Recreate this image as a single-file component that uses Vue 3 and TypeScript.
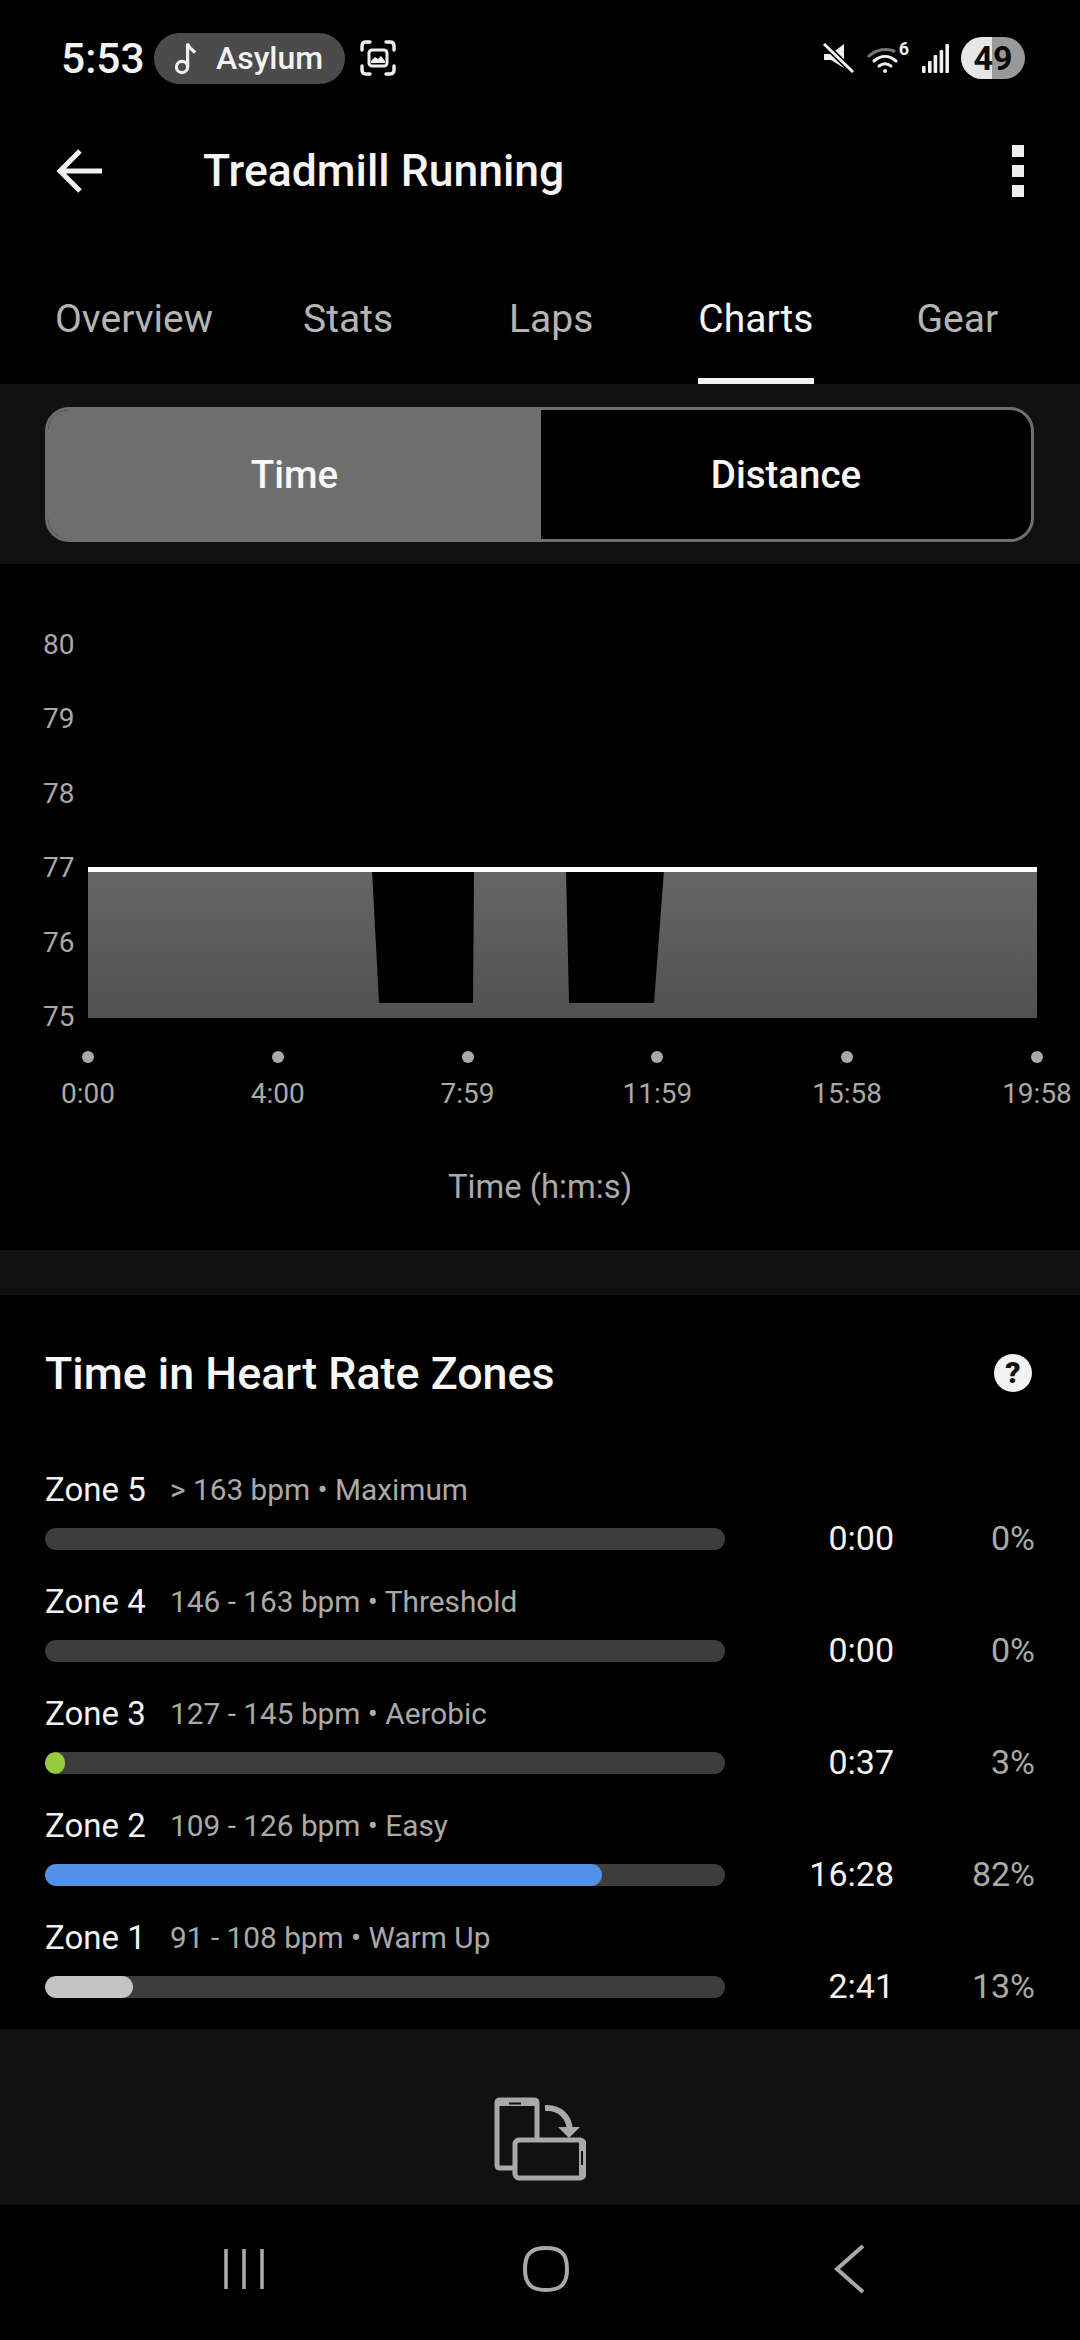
<script setup lang="ts">
import { ref } from "vue";

const tabs = ref(["Overview", "Stats", "Laps", "Charts", "Gear"]);
const yLabels = ref(["80", "79", "78", "77", "76", "75"]);
const xLabels = ref(["0:00", "4:00", "7:59", "11:59", "15:58", "19:58"]);

const zones = ref([
  { name: "Zone 5", info: "> 163 bpm • Maximum", time: "0:00", pct: "0%", width: 0, color: "transparent" },
  { name: "Zone 4", info: "146 - 163 bpm • Threshold", time: "0:00", pct: "0%", width: 0, color: "transparent" },
  { name: "Zone 3", info: "127 - 145 bpm • Aerobic", time: "0:37", pct: "3%", width: 20, color: "#96cb3c" },
  { name: "Zone 2", info: "109 - 126 bpm • Easy", time: "16:28", pct: "82%", width: 557, color: "#5191ea" },
  { name: "Zone 1", info: "91 - 108 bpm • Warm Up", time: "2:41", pct: "13%", width: 88, color: "#c4c4c4" },
]);
</script>

<template>
  <div class="screen">
    <div class="status-bar">
      <span class="clock">5:53</span>
      <div class="music-pill">
        <svg class="note" width="28" height="34" viewBox="0 0 28 34" fill="none" stroke="#f0f0f0" stroke-width="3.2">
          <circle cx="8" cy="26" r="5.6" />
          <path d="M13.6 26V2.5c1 4.5 4.5 6 7.5 9" />
        </svg>
        <span>Asylum</span>
      </div>
      <svg class="capture" width="36" height="36" viewBox="0 0 36 36" fill="none" stroke="#f0f0f0" stroke-width="3.4" stroke-linecap="round">
        <path d="M2 10V6q0-4 4-4h4M26 2h4q4 0 4 4v4M34 26v4q0 4-4 4h-4M10 34H6q-4 0-4-4v-4" />
        <rect x="9" y="10" width="18" height="16" rx="3" stroke-width="3" />
        <path d="M11 21l4-4 3 2 3-3 4 5v2H11z" fill="#f0f0f0" stroke="none" />
      </svg>

      <div class="status-right">
        <svg width="32" height="30" viewBox="0 0 32 30" fill="#f0f0f0">
          <path d="M1 11h7L21 1v24L8 17H1z" />
          <path d="M1 1l29 28" stroke="#000" stroke-width="6" />
          <path d="M1 1l29 28" stroke="#f0f0f0" stroke-width="3" />
        </svg>
        <div class="wifi">
          <svg width="38" height="26" viewBox="0 0 38 26" fill="none" stroke-linecap="round">
            <path d="M2 9C10 2 20 1 27 4" stroke="#777" stroke-width="3" />
            <path d="M7 14c7-6 15-6 22 0" stroke="#f0f0f0" stroke-width="3" />
            <path d="M12 19c4-3 8-3 12 0" stroke="#f0f0f0" stroke-width="3" />
            <circle cx="18" cy="24" r="2" fill="#f0f0f0" />
          </svg>
          <span class="wifi-six">6</span>
        </div>
        <svg class="signal" width="28" height="29" viewBox="0 0 28 29" fill="#f0f0f0">
          <rect x="0" y="22" width="3.6" height="7" rx="1" />
          <rect x="6" y="17" width="3.6" height="12" rx="1" />
          <rect x="11.6" y="11" width="3.6" height="18" rx="1" />
          <rect x="17.6" y="6" width="3.6" height="23" rx="1" />
          <rect x="23.4" y="0" width="3.6" height="29" rx="1" />
        </svg>
        <div class="battery"><span>49</span></div>
      </div>
    </div>

    <header class="app-header">
      <svg width="46" height="44" viewBox="0 0 46 44" fill="none" stroke="#f2f2f2" stroke-width="5">
        <path d="M46 22H4M24 2L4 22l20 20" />
      </svg>
      <h1>Treadmill Running</h1>
      <div class="kebab"><i></i><i></i><i></i></div>
    </header>

    <nav class="tabs">
      <div v-for="t in tabs" :key="t" class="tab" :class="{ active: t === 'Charts' }">{{ t }}</div>
    </nav>

    <div class="band toggle-band">
      <div class="toggle">
        <div class="seg selected">Time</div>
        <div class="seg">Distance</div>
      </div>
    </div>

    <section class="chart">
      <div class="chart-main">
        <div class="y-axis">
          <span v-for="y in yLabels" :key="y">{{ y }}</span>
        </div>
        <svg class="plot" width="949" height="446" viewBox="0 0 949 446">
          <defs>
            <linearGradient id="areaFill" x1="0" y1="0" x2="0" y2="1">
              <stop offset="0" stop-color="#666666" />
              <stop offset="1" stop-color="#515151" />
            </linearGradient>
          </defs>
          <path
            d="M0 262H284L291 395H385L386 262H478L481 395H566L576 262H949V410H0Z"
            fill="url(#areaFill)"
          />
          <rect x="0" y="259" width="949" height="5" fill="#fff" />
        </svg>
      </div>
      <div class="x-axis">
        <div v-for="x in xLabels" :key="x" class="tick">
          <i class="dot"></i>
          <span>{{ x }}</span>
        </div>
      </div>
      <div class="axis-title">Time (h:m:s)</div>
    </section>

    <div class="band gap-band"></div>

    <section class="zones">
      <div class="zones-head">
        <h2>Time in Heart Rate Zones</h2>
        <div class="help">?</div>
      </div>
      <div v-for="z in zones" :key="z.name" class="zone">
        <div class="zone-main">
          <div class="zone-label">
            <span class="zone-name">{{ z.name }}</span>
            <span class="zone-info">{{ z.info }}</span>
          </div>
          <div class="track">
            <div class="fill" :style="{ width: z.width + 'px', background: z.color }"></div>
          </div>
        </div>
        <div class="zone-time">{{ z.time }}</div>
        <div class="zone-pct">{{ z.pct }}</div>
      </div>
    </section>

    <div class="band rotate-band">
      <svg width="92" height="84" viewBox="0 0 92 84" fill="none" stroke="#a9a9a9">
        <path d="M20 71H6q-3 0-3-3V6q0-3 3-3h34q3 0 3 3v38" stroke-width="5" />
        <rect x="1" y="3" width="44" height="6" fill="#a9a9a9" stroke="none" rx="3" />
        <rect x="15" y="5.5" width="12" height="2" fill="#111" stroke="none" />
        <rect x="21" y="43" width="69" height="38" rx="4" stroke-width="5" />
        <rect x="85" y="44" width="6" height="36" fill="#a9a9a9" stroke="none" />
        <rect x="87" y="54" width="2" height="14" fill="#111" stroke="none" />
        <path d="M51 11c15-1 24 9 25 22" stroke-width="6" />
        <path d="M64 30h22L75 41z" fill="#a9a9a9" stroke="none" />
      </svg>
    </div>

    <div class="nav-bar">
      <svg width="44" height="44" viewBox="0 0 44 44" stroke="#a9a9a9" stroke-width="3.6">
        <path d="M4 2v40M22 2v40M40 2v40" />
      </svg>
      <svg width="46" height="46" viewBox="0 0 46 46" fill="none" stroke="#a9a9a9" stroke-width="4">
        <path d="M23 2c15 0 21 6 21 21s-6 21-21 21S2 38 2 23 8 2 23 2z" />
      </svg>
      <svg width="32" height="50" viewBox="0 0 32 50" fill="none" stroke="#a9a9a9" stroke-width="4">
        <path d="M30 2L4 25l26 23" />
      </svg>
    </div>
  </div>
</template>

<style scoped>
.screen {
  width: 1080px;
  height: 2340px;
  background: #000;
  color: #fff;
  font-family: Roboto, "Liberation Sans", sans-serif;
  overflow: hidden;
}

.status-bar {
  height: 116px;
  display: flex;
  align-items: center;
  padding: 0 55px 0 61px;
}
.clock {
  font-size: 42.5px;
  font-weight: 500;
  color: #f2f2f2;
  width: 93px;
  flex: none;
}
.music-pill {
  width: 191px;
  height: 51px;
  border-radius: 26px;
  background: #4b4b4b;
  display: flex;
  align-items: center;
  padding-left: 20px;
  box-sizing: border-box;
  gap: 14px;
  font-size: 32px;
  font-weight: 500;
  color: #f2f2f2;
}
.capture {
  margin-left: 15px;
}
.status-right {
  margin-left: auto;
  display: flex;
  align-items: center;
}
.wifi {
  position: relative;
  margin-left: 12px;
  width: 40px;
  height: 32px;
  padding-top: 5px;
  box-sizing: border-box;
}
.wifi-six {
  position: absolute;
  top: -4px;
  right: -2px;
  font-size: 18px;
  font-weight: 700;
  color: #f0f0f0;
}
.signal {
  margin-left: 15px;
}
.battery {
  margin-left: 11px;
  width: 64px;
  height: 42px;
  border-radius: 21px;
  background: linear-gradient(90deg, #e6e6e6 0 31px, #999 31px);
  color: #0a0a0a;
  font-size: 34px;
  font-weight: 700;
  display: flex;
  align-items: center;
  justify-content: center;
}

.app-header {
  height: 110px;
  display: flex;
  align-items: center;
  padding-left: 56px;
  padding-right: 56px;
}
.app-header h1 {
  margin: 0 0 0 101px;
  font-size: 44.5px;
  font-weight: 500;
  color: #f5f5f5;
}
.kebab {
  margin-left: auto;
  display: flex;
  flex-direction: column;
  gap: 8px;
}
.kebab i {
  width: 12px;
  height: 12px;
  background: #eee;
  display: block;
}

.tabs {
  height: 158px;
  display: flex;
  padding-left: 55px;
  box-sizing: border-box;
}
.tab {
  position: relative;
  height: 158px;
  line-height: 187px;
  font-size: 39px;
  color: #b4b4b4;
  margin-left: 105px;
}
.tab:nth-child(1) {
  margin-left: 0;
}
.tab:nth-child(2) {
  margin-left: 90px;
}
.tab:nth-child(3) {
  margin-left: 116px;
}
.tab:nth-child(5) {
  margin-left: 103px;
}
.tab.active {
  color: #f5f5f5;
}
.tab.active::after {
  content: "";
  position: absolute;
  left: 0;
  right: 0;
  bottom: 0;
  height: 6px;
  background: #f2f2f2;
}

.band {
  background: #111;
}
.toggle-band {
  height: 180px;
  padding: 23px 46px 22px 45px;
  box-sizing: border-box;
}
.toggle {
  height: 135px;
  display: flex;
  border: 3px solid #6e6e6e;
  border-radius: 24px;
  overflow: hidden;
  box-sizing: border-box;
  background: #000;
}
.seg {
  flex: 1;
  display: flex;
  align-items: center;
  justify-content: center;
  font-size: 38.5px;
  font-weight: 500;
  color: #f7f7f7;
}
.seg.selected {
  flex: 0 0 493px;
  background: #6e6e6e;
}

.chart {
  height: 686px;
  padding-top: 45px;
  box-sizing: border-box;
}
.chart-main {
  display: flex;
  margin-top: -1px;
}
.y-axis {
  width: 88px;
  padding-left: 43px;
  box-sizing: border-box;
  display: flex;
  flex-direction: column;
  font-size: 28px;
  color: #a9a9a9;
}
.y-axis span {
  height: 74.4px;
  line-height: 74.4px;
}
.plot {
  display: block;
}
.x-axis {
  display: flex;
  justify-content: space-between;
  padding: 0 43px 0 88px;
  margin-top: -3px;
}
.tick {
  width: 0;
  display: flex;
  flex-direction: column;
  align-items: center;
  font-size: 28px;
  color: #a9a9a9;
  white-space: nowrap;
}
.tick span {
  margin-top: 13px;
  line-height: 36px;
}
.dot {
  width: 12px;
  height: 12px;
  flex: none;
  border-radius: 50%;
  background: #a9a9a9;
  display: block;
}
.axis-title {
  margin-top: 55px;
  text-align: center;
  font-size: 32.8px;
  line-height: 40px;
  color: #a9a9a9;
}

.gap-band {
  height: 45px;
}

.zones {
  height: 734px;
  padding: 51px 45px 0;
  box-sizing: border-box;
}
.zones-head {
  display: flex;
  align-items: center;
  justify-content: space-between;
  height: 54px;
  margin-bottom: 67px;
}
.zones-head h2 {
  margin: 0;
  font-size: 44.8px;
  font-weight: 500;
  color: #f7f7f7;
}
.help {
  width: 38px;
  height: 38px;
  margin-right: 3px;
  border-radius: 50%;
  background: #f2f2f2;
  color: #111;
  font-size: 30px;
  font-weight: 900;
  line-height: 38px;
  text-align: center;
}
.zone {
  display: grid;
  grid-template-columns: 680px 169px 141px;
  align-items: end;
  margin-bottom: 29px;
}
.zone-label {
  height: 44px;
  display: flex;
  align-items: center;
  margin-bottom: 17px;
}
.zone-name {
  width: 125px;
  font-size: 33px;
  color: #f2f2f2;
}
.zone-info {
  font-size: 29.8px;
  color: #a9a9a9;
  white-space: nowrap;
}
.track {
  height: 22px;
  border-radius: 11px;
  background: #3d3d3d;
  overflow: hidden;
}
.fill {
  height: 100%;
  border-radius: 11px;
}
.zone-time,
.zone-pct {
  text-align: right;
  font-size: 34px;
  line-height: 22px;
  margin-bottom: 1px;
}
.zone-time {
  color: #f2f2f2;
}
.zone-pct {
  color: #a9a9a9;
}

.rotate-band {
  height: 176px;
  display: flex;
  align-items: flex-start;
  justify-content: center;
  padding-top: 68px;
  box-sizing: border-box;
}

.nav-bar {
  height: 135px;
  display: flex;
  align-items: center;
  padding-left: 222px;
  padding-bottom: 8px;
  box-sizing: border-box;
}
.nav-bar svg:nth-child(2) {
  margin-left: 257px;
}
.nav-bar svg:nth-child(3) {
  margin-left: 264px;
}
</style>

<style>
html,
body {
  margin: 0;
  background: #000;
}
</style>
